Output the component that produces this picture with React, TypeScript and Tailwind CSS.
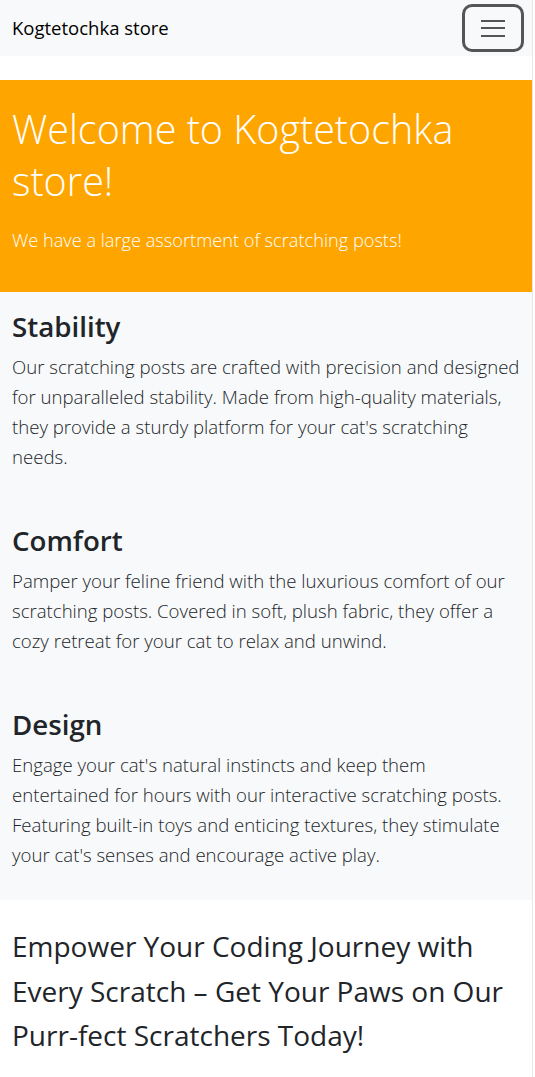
import React from "react";

const features = [
  {
    title: "Stability",
    text: "Our scratching posts are crafted with precision and designed for unparalleled stability. Made from high-quality materials, they provide a sturdy platform for your cat's scratching needs.",
  },
  {
    title: "Comfort",
    text: "Pamper your feline friend with the luxurious comfort of our scratching posts. Covered in soft, plush fabric, they offer a cozy retreat for your cat to relax and unwind.",
  },
  {
    title: "Design",
    text: "Engage your cat's natural instincts and keep them entertained for hours with our interactive scratching posts. Featuring built-in toys and enticing textures, they stimulate your cat's senses and encourage active play.",
  },
];

export default function App() {
  return (
    <div className="w-[533px] min-h-[1077px] bg-white text-[#212529] font-['Open_Sans',sans-serif] border-r border-[#e6e6e6]">
      <nav className="h-[56px] bg-[#f8f9fa] flex items-center justify-between pl-3 pr-[8px]">
        <span className="text-[18.5px] leading-[30px] text-black">Kogtetochka store</span>
        <button className="w-[62px] h-[48px] rounded-[10px] border-[3px] border-[#555] flex flex-col items-center justify-center gap-[5.5px]">
          <span className="block w-[24px] h-[2px] bg-[#555]" />
          <span className="block w-[24px] h-[2px] bg-[#555]" />
          <span className="block w-[24px] h-[2px] bg-[#555]" />
        </button>
      </nav>

      <header className="mt-6 h-[212px] bg-[#ffa500] px-3 pt-[23px] text-white">
        <h1 className="text-[39.5px] leading-[52px] font-light">Welcome to Kogtetochka store!</h1>
        <p className="mt-[18px] text-[18.2px] leading-[30px] font-light">We have a large assortment of scratching posts!</p>
      </header>

      <section className="bg-[#f8f9fa] px-3 pt-[16px] pb-[30px] flex flex-col gap-[50px]">
        {features.map((f) => (
          <div key={f.title}>
            <h2 className="text-[27.7px] leading-[36px] font-semibold">{f.title}</h2>
            <p className="mt-[8px] text-[18.6px] leading-[30px] font-light">{f.text}</p>
          </div>
        ))}
      </section>

      <section className="px-3 pt-[24px]">
        <p className="text-[28px] leading-[44.5px]">
          Empower Your Coding Journey with Every Scratch – Get Your Paws on Our Purr-fect Scratchers Today!
        </p>
      </section>
    </div>
  );
}
